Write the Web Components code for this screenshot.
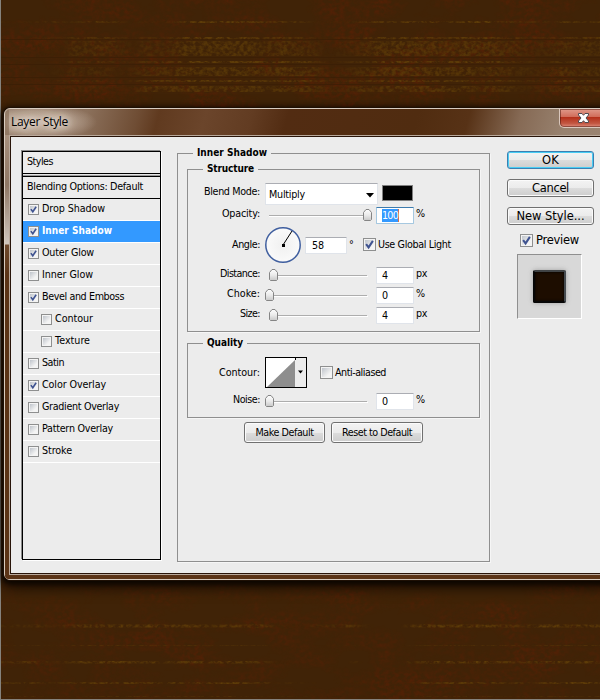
<!DOCTYPE html>
<html lang="en"><head><meta charset="utf-8"><title>Layer Style</title>
<style>
html,body{margin:0;width:600px;height:700px;overflow:hidden;background:#402307}
body{font:9.6px/12px "DejaVu Sans",sans-serif;color:#000}
</style></head><body>
<layer-style-app></layer-style-app>
<script>
const define=(name,html,setup)=>customElements.define(name,class extends HTMLElement{
  connectedCallback(){
    if(this.shadowRoot)return;
    const t=document.createElement('template');t.innerHTML=html;
    this.attachShadow({mode:'open'}).append(t.content.cloneNode(true));
    if(setup)setup(this,this.shadowRoot);
  }
});

// Text fitted to a given width through letter spacing
define('ui-text',`<style>:host{display:inline-block;white-space:pre;flex:none}span{display:inline-block}</style><span><slot></slot></span>`,(h,r)=>{
  const w=+h.getAttribute('w');if(!w)return;
  const s=r.querySelector('span'),n=h.textContent.length;
  s.style.letterSpacing=((w-s.getBoundingClientRect().width)/n)+'px';
  h.style.width=w+'px';
});

define('ui-check',`<style>:host{display:block;flex:none;width:11px;height:11px;box-sizing:border-box;border:1px solid #8e8f8f;background:#f4f4f4;padding:1px}
:host([size="13"]){width:13px;height:13px}
div{width:100%;height:100%;background:linear-gradient(135deg,#bfc4cb,#f4f4f4 75%);outline:0}
svg{display:none;width:100%;height:100%;overflow:visible}:host([on]) svg{display:block}</style>
<div><svg viewBox="0 0 8 8"><path d="M1 3.6 3.2 6.6 7 0.8" fill="none" stroke="#3f5390" stroke-width="1.8"/></svg></div>`);

define('style-row',`<style>:host{display:flex;align-items:center;height:21px;border-bottom:1px solid #fff;padding-left:5px;gap:3px}
:host([sub]){padding-left:18px}
:host([selected]){background:#3399ff;color:#fff;font:bold 10px/12px "DejaVu Sans Condensed","DejaVu Sans",sans-serif}
ui-check{position:relative;top:-.5px}
::slotted(ui-text){margin-bottom:2px}</style><ui-check></ui-check><slot></slot>`,(h,r)=>{
  if(h.hasAttribute('on'))r.querySelector('ui-check').setAttribute('on','');
});

define('style-list',`<style>:host{display:block;box-sizing:border-box;width:139px;height:409px;border:1px solid #000;box-shadow:-1px -1px 0 #8a8a8a,1px 1px 0 #fff}
.h{height:21px;border-bottom:1px solid #000;display:flex;align-items:center;padding-left:4px}
.h ui-text{margin-bottom:2px}
.s{height:2px;background:#999;border-bottom:1px solid #000;box-shadow:inset 0 1px #e6e6e6}
</style><div class="h"><ui-text w="26">Styles</ui-text></div><div class="s"></div>
<div class="h"><ui-text w="116">Blending Options: Default</ui-text></div>
<style-row on><ui-text w="63">Drop Shadow</ui-text></style-row>
<style-row on selected><ui-text w="70">Inner Shadow</ui-text></style-row>
<style-row on><ui-text w="52">Outer Glow</ui-text></style-row>
<style-row><ui-text w="51">Inner Glow</ui-text></style-row>
<style-row on><ui-text w="82">Bevel and Emboss</ui-text></style-row>
<style-row sub><ui-text w="38">Contour</ui-text></style-row>
<style-row sub><ui-text w="35">Texture</ui-text></style-row>
<style-row><ui-text w="22">Satin</ui-text></style-row>
<style-row on><ui-text w="64">Color Overlay</ui-text></style-row>
<style-row><ui-text w="77">Gradient Overlay</ui-text></style-row>
<style-row><ui-text w="71">Pattern Overlay</ui-text></style-row>
<style-row><ui-text w="30">Stroke</ui-text></style-row>`);

define('group-box',`<style>:host{display:block;position:relative;box-sizing:border-box;border:1px solid #8f8f8f;box-shadow:1px 1px 0 #f6f6f6}
.l{position:absolute;top:-7px;left:15px;padding:0 4px;background:#ececec;font:bold 10px/12px "DejaVu Sans Condensed","DejaVu Sans",sans-serif}</style>
<div class="l"><slot name="legend"></slot></div><slot></slot>`);

define('form-row',`<style>:host{display:grid;grid-template-columns:72px auto;column-gap:5px;align-items:start}
.l{display:flex;justify-content:flex-end;padding-top:var(--lt,1px)}.c{display:flex;align-items:flex-start}</style>
<div class="l"><slot name="label"></slot></div><div class="c"><slot></slot></div>`);

define('num-field',`<style>:host{display:block;flex:none;box-sizing:border-box;width:38px;height:17px;border:1px solid #e0e4ea;border-top-color:#abadb3;border-radius:1px;background:#fff;padding:2px 0 0 5px}
:host([focus]){border-color:#a6c8e0;border-top-color:#3d7bad;padding-top:1px}
:host([focus]) span{display:inline-block;background:#3399ff;color:#fff;height:12px;padding-top:1px;line-height:12px;border-right:1px solid #d07050}
:host([wide]){width:42px;padding-left:6px}</style><span><slot></slot></span>`);

define('slide-bar',`<style>:host{display:block;flex:none;width:111px;height:17px}
svg{display:block}</style><svg width="111" height="17"><defs><linearGradient id="g" x2="0" y2="1"><stop stop-color="#fdfdfd"/><stop offset=".5" stop-color="#ebebeb"/><stop offset="1" stop-color="#c8c8c8"/></linearGradient></defs>
<path d="M4 8.5H102" stroke="#adadad"/><path d="M4 9.5H103" stroke="#fff"/>
<g id="t"><path d="M.5 5.5 3 2.5H6L8.5 5.5V12.5L7.5 13.5H1.5L.5 12.5Z" fill="url(#g)" stroke="#858585"/></g></svg>`,(h,r)=>{
  r.getElementById('t').setAttribute('transform',`translate(${h.getAttribute('pos')} 0)`);
});

define('push-button',`<style>:host{display:flex;box-sizing:border-box;justify-content:center;align-items:center;height:21px;border:1px solid #707070;border-radius:3px;box-shadow:inset 0 0 0 1px #fbfbfb;background:linear-gradient(#f3f3f3,#ebebeb 50%,#dcdcdc 51%,#cdcdcd)}
:host([big]){width:87px;height:18px;font-size:11.5px;line-height:14px}
:host([primary]){border-color:#3c7fb1;box-shadow:inset 0 0 0 1px #48cdf4}</style><slot></slot>`);

define('inner-shadow-panel',`<style>:host{display:block}
.outer{width:313px;height:409px;padding:15px 9px 0}
.st{height:163px;padding-top:13px}.q{height:75px;margin-top:11px;padding-top:13px}
.dd{box-sizing:border-box;width:113px;height:22px;background:#fff;border:1px solid #e0e4ea;border-top-color:#abadb3;display:flex;justify-content:space-between;padding:5px 3px 0}
.dd svg{margin-top:4px}
.sw{width:29px;height:14px;background:#000;border:1px solid #808080;margin:2px 0 0 4px}
.u{margin:1px 0 0 2px}
.row3{margin-top:3px;--lt:12px}.row4{margin-top:3px}.row5{margin-top:3px}
.b{display:flex;gap:6px;margin:4px 0 0 57px}
.cb{display:flex;align-items:center;gap:2px}
</style>
<group-box class="outer"><ui-text slot="legend" w="70">Inner Shadow</ui-text>
<group-box class="st"><ui-text slot="legend" w="47">Structure</ui-text>
<form-row style="--lt:3px"><ui-text slot="label" w="56">Blend Mode:</ui-text><div class="dd"><ui-text w="36">Multiply</ui-text><svg width="8" height="5"><path d="M0 0H8L4 4.5Z"/></svg></div><div class="sw"></div></form-row>
<form-row style="margin-top:2px"><ui-text slot="label" w="38">Opacity:</ui-text><slide-bar pos="98"></slide-bar><num-field focus><ui-text w="16">100</ui-text></num-field><ui-text class="u" w="10">%</ui-text></form-row>
<form-row class="row3"><ui-text slot="label" w="28">Angle:</ui-text>
<svg width="36" height="37"><defs><radialGradient id="d"><stop stop-color="#f0f0f0"/><stop offset="1" stop-color="#fafafa"/></radialGradient></defs><circle cx="18" cy="18" r="17.2" fill="url(#d)" stroke="#405f9f" stroke-width="1.5"/><path d="M18 18 27 4" stroke="#000"/><rect x="17" y="17" width="3" height="3"/></svg>
<num-field wide style="margin:10px 0 0 4px"><ui-text w="12">58</ui-text></num-field><ui-text style="margin:12px 0 0 2px" w="5">°</ui-text>
<div class="cb" style="margin:11px 0 0 9px"><ui-check size="13" on></ui-check><ui-text w="73">Use Global Light</ui-text></div></form-row>
<form-row class="row4"><ui-text slot="label" w="40">Distance:</ui-text><slide-bar pos="4"></slide-bar><num-field><ui-text>4</ui-text></num-field><ui-text class="u" w="11">px</ui-text></form-row>
<form-row class="row5"><ui-text slot="label" w="33">Choke:</ui-text><slide-bar pos="0"></slide-bar><num-field><ui-text>0</ui-text></num-field><ui-text class="u" w="10">%</ui-text></form-row>
<form-row class="row5"><ui-text slot="label" w="20">Size:</ui-text><slide-bar pos="4"></slide-bar><num-field><ui-text>4</ui-text></num-field><ui-text class="u" w="11">px</ui-text></form-row>
</group-box>
<group-box class="q"><ui-text slot="legend" w="36">Quality</ui-text>
<form-row style="--lt:10px"><ui-text slot="label" w="41">Contour:</ui-text>
<svg width="42" height="31"><rect x=".5" y=".5" width="41" height="30" fill="#ececec" stroke="#000"/><rect x="1" y="1" width="29" height="29" fill="#fff"/><path d="M2 30 30 3V30Z" fill="#8e8e8e"/><path d="M30.5 1V3" stroke="#000"/><path d="M33 13.5H38L35.5 16.5Z"/></svg>
<div class="cb" style="margin:9px 0 0 13px"><ui-check size="13"></ui-check><ui-text w="51">Anti-aliased</ui-text></div></form-row>
<form-row style="margin-top:5px"><ui-text slot="label" w="27">Noise:</ui-text><slide-bar pos="0"></slide-bar><num-field><ui-text>0</ui-text></num-field><ui-text class="u" w="10">%</ui-text></form-row>
</group-box>
<div class="b"><push-button style="width:81px"><ui-text w="58">Make Default</ui-text></push-button><push-button style="width:92px"><ui-text w="70">Reset to Default</ui-text></push-button></div>
</group-box>`);

define('action-column',`<style>:host{display:block}.c{display:flex;flex-direction:column;gap:10px}
.p{display:flex;align-items:center;gap:3px;margin:8px 0 0 13px;font-size:11.5px;line-height:14px}
.v{box-sizing:border-box;width:65px;height:65px;margin:7px 0 0 10px;border:1px solid #8f8f8f;border-right-color:#fff;border-bottom-color:#fff;background:#d8d8d8;display:grid;place-items:center}
.v i{box-sizing:border-box;width:33px;height:33px;background:#1d0d00;border:2px solid #070707;border-top-color:#404345;border-right-color:#454b50;border-radius:2px;box-shadow:inset 0 0 3px #000,0 0 5px #a0a0a0}</style>
<div class="c"><push-button big primary><ui-text w="17">OK</ui-text></push-button><push-button big><ui-text w="37">Cancel</ui-text></push-button><push-button big><ui-text w="68">New Style...</ui-text></push-button></div>
<div class="p"><ui-check size="13" on></ui-check><ui-text w="43">Preview</ui-text></div><div class="v"><i></i></div>`);

define('aero-window',`<style>:host{display:block;box-sizing:border-box;width:640px;height:472px;border:1px solid #d8ccc0;border-radius:6px;padding:0 4px 4px;
background:linear-gradient(#a8917e,#8f7764 50px,#d0c6bd 109px,#6f4a2d 110px,#5b3417 140px) 0 26px/6px 100% no-repeat,linear-gradient(105deg,#937a66 0,#8b705b 80px,#6f4d34 130px,#603a1f 150px,#6b452b 195px,#623c22 240px,#522c12 275px,#502c10 400px,#573216 450px,#866a55 500px,#98826f 545px,#9c8674 640px);
box-shadow:0 0 0 1px #1d0f04,0 2px 5px 2px #0d0600,0 5px 13px 3px rgba(0,0,0,.65)}
.t{height:26px;display:flex;justify-content:space-between;font:12px/15px "Open Sans","Noto Sans",sans-serif;background:radial-gradient(ellipse 60px 18px at 28px 13px,#d8c8bab0,#d8c8ba70 60%,transparent)}
.n{margin:5px 0 0 2px;text-shadow:0 0 7px #fff,0 0 10px #ead9cb,0 0 12px #e5d6ca}
.x{box-sizing:border-box;width:77px;height:19px;margin-right:3px;border:1px solid #d9c7bd;border-top:0;border-radius:0 0 5px 5px;background:linear-gradient(#e09a8b,#d06b58 45%,#b4301a 46%,#c35742 80%,#df8e7e);box-shadow:inset 0 0 0 1px rgba(70,15,5,.5)}
.x svg{display:block;margin:3px 0 0 17px}
.m{height:436px;border:1px solid #281409;outline:1px solid #b9a99b;background:#ececec;margin:1px}
.bot{background:#5b3417;height:4px;margin:1px -4px 0;border-radius:0 0 0 5px}
</style>
<div class="t"><ui-text class="n" w="57">Layer Style</ui-text><div class="x"><svg width="13" height="12" viewBox="0 0 13 12"><path d="M1.5 1.5H5L6.5 3.3 8 1.5H11.5V3L9 6 11.5 9V10.5H8L6.5 8.7 5 10.5H1.5V9L4 6 1.5 3Z" fill="#fff" stroke="#4e4a50"/></svg></div></div>
<div class="m"><slot></slot></div><div class="bot"></div>`);

define('wood-texture',`<style>:host{display:block;width:600px;height:700px}svg{display:block}</style>
<svg width="600" height="700"><defs>
<filter id="r" x="0" y="0" width="100%" height="100%" color-interpolation-filters="sRGB"><feTurbulence type="fractalNoise" baseFrequency=".2 .25" numOctaves="3" seed="4"/><feColorMatrix values="0 0 0 0 .35 0 0 0 0 .125 0 0 0 0 .02 2.2 0 0 0 -.7" result="a"/>
<feTurbulence type="fractalNoise" baseFrequency=".016 .03" numOctaves="4" seed="9"/><feColorMatrix values="0 0 0 0 0 0 0 0 0 0 0 0 0 0 0 3.2 0 0 0 -1.25"/><feComposite in="a" operator="in"/></filter>
<filter id="y" x="0" y="0" width="600" height="700" filterUnits="userSpaceOnUse" color-interpolation-filters="sRGB"><feTurbulence type="fractalNoise" baseFrequency=".25 .28" numOctaves="3" seed="12"/><feColorMatrix values="0 0 0 0 0 0 0 0 0 0 0 0 0 0 0 2.6 0 0 0 -.85" result="n"/>
<feTurbulence type="fractalNoise" baseFrequency=".011 .004" numOctaves="4" seed="33"/><feColorMatrix values="0 0 0 0 0 0 0 0 0 0 0 0 0 0 0 3.4 0 0 0 -1.2" result="m"/><feComposite in="SourceGraphic" in2="n" operator="in"/><feComposite in2="m" operator="in"/></filter></defs>
<rect width="600" height="700" fill="#402307"/>
<rect y="0" width="600" height="108" filter="url(#r)" opacity=".8"/><rect y="580" width="600" height="120" filter="url(#r)" opacity=".65"/>
<g fill="#5e3c08" filter="url(#y)"><path d="M0 21h600v2H0zM0 37h600v3H0zM0 61h600v2H0zM0 80h600v2H0zM0 624.500h600v3H0zM0 661h600v2.500H0zM0 682h600v2H0z"/><path d="M0 41h600v15H0zM0 67h600v9H0zM0 86h600v6H0z" opacity=".75"/><path d="M0 645h600v1H0zM0 696h600v1H0z" opacity=".5"/></g>
<path d="M0 39.5H600M0 57.5H600M0 64.5H600M0 77.5H600M0 84.5H600" stroke="#3a1e05" opacity=".7"/>
<path d="M.5 0V700M0 699.5H600" stroke="#85827c" fill="none"/></svg>`);

define('layer-style-app',`<style>:host{display:grid;width:600px;height:700px;overflow:hidden}
wood-texture,.desk{grid-area:1/1}.desk{padding:108px 0 0 4px;z-index:1;width:596px;overflow:hidden}
.body{display:flex;align-items:flex-start;padding:14px 0 0 11px}
inner-shadow-panel{margin:2px 17px 0 16px}</style>
<wood-texture></wood-texture><div class="desk"><aero-window><div class="body"><style-list></style-list><inner-shadow-panel></inner-shadow-panel><action-column></action-column></div></aero-window></div>`);
</script></body></html>
